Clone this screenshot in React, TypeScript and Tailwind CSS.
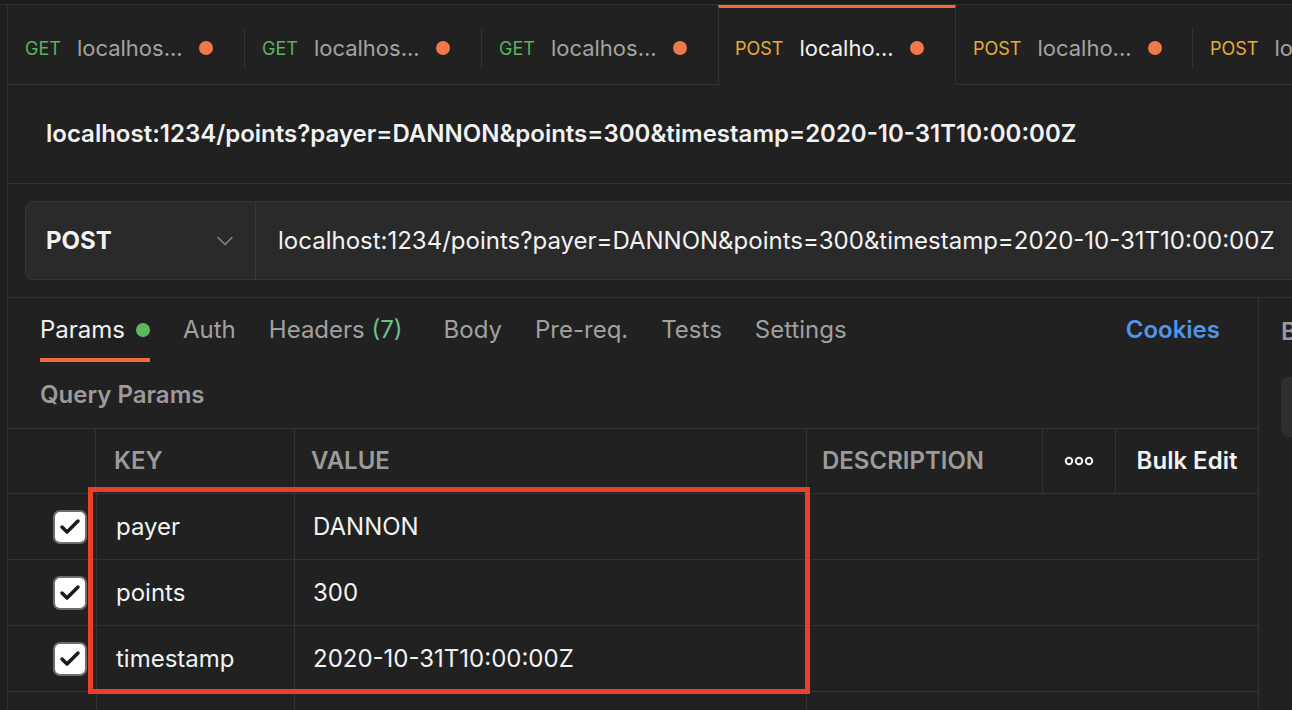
import { Check, ChevronDown } from 'lucide-react';

const tabs = [
  { method: 'GET', label: 'localhos...', active: false },
  { method: 'GET', label: 'localhos...', active: false },
  { method: 'GET', label: 'localhos...', active: false },
  { method: 'POST', label: 'localho...', active: true },
  { method: 'POST', label: 'localho...', active: false },
  { method: 'POST', label: 'localhost:1234', active: false },
];

const params = [
  { key: 'payer', value: 'DANNON' },
  { key: 'points', value: '300' },
  { key: 'timestamp', value: '2020-10-31T10:00:00Z' },
];

const url = 'localhost:1234/points?payer=DANNON&points=300&timestamp=2020-10-31T10:00:00Z';

function Tab({ method, label, active }: { method: string; label: string; active: boolean }) {
  return (
    <div
      className={
        active
          ? 'relative z-10 -mb-px flex h-[80px] w-[238px] shrink-0 items-center gap-4 border-x border-t-[3px] border-x-[#333] border-t-[#f26b3a] bg-[#212121] px-4 pt-[3px]'
          : 'flex h-[79px] w-[236px] shrink-0 items-center gap-4 px-[17px] pt-[7px]'
      }
    >
      <span className={method === 'GET' ? 'text-[18px] text-[#59b35f]' : 'text-[18px] text-[#e9ac34]'}>{method}</span>
      <span className={active ? 'whitespace-nowrap text-[22px] text-[#f2f2f2]' : 'whitespace-nowrap text-[22px] text-[#a3a3a3]'}>{label}</span>
      <span className="h-[14px] w-[14px] shrink-0 rounded-full bg-[#f0784a]" />
    </div>
  );
}

function Sep() {
  return <div className="mt-[7px] h-[41px] w-px shrink-0 bg-[#333]" />;
}

function Dots() {
  return (
    <svg width="30" height="10" viewBox="0 0 30 10" fill="none" stroke="#f2f2f2" strokeWidth="2">
      <circle cx="5" cy="5" r="3.2" />
      <circle cx="15" cy="5" r="3.2" />
      <circle cx="25" cy="5" r="3.2" />
    </svg>
  );
}

export default function App() {
  return (
    <div className="relative flex h-[710px] w-[1292px] flex-col overflow-hidden bg-[#212121] font-['Inter',sans-serif]">
      {/* top strip */}
      <div className="h-[5px] shrink-0 border-b border-[#313131] bg-[#1b1b1b]" />
      <div className="flex min-h-0 flex-1">
        {/* left strip */}
        <div className="w-[8px] shrink-0 border-r border-[#313131] bg-[#1f1f1f]" />

        <div className="flex min-w-0 flex-1 flex-col">
          {/* open tabs */}
          <div className="flex h-[80px] shrink-0 items-center border-b border-[#333]">
            <Tab {...tabs[0]} />
            <Sep />
            <Tab {...tabs[1]} />
            <Sep />
            <Tab {...tabs[2]} />
            <Tab {...tabs[3]} />
            <Tab {...tabs[4]} />
            <Sep />
            <Tab {...tabs[5]} />
          </div>

          {/* request title */}
          <div className="flex h-[99px] shrink-0 items-center border-b border-[#333] pl-[38px]">
            <span className="whitespace-nowrap text-[24px] font-semibold text-[#f2f2f2]">{url}</span>
          </div>

          {/* url bar */}
          <div className="shrink-0 py-[17px] pl-[17px]">
            <div className="flex h-[79px] w-[1300px] items-center rounded-lg border border-[#363636] bg-[#2a2a2a]">
              <div className="flex h-full w-[230px] shrink-0 items-center justify-between border-r border-[#3a3a3a] pl-5 pr-[16px]">
                <span className="text-[24px] font-bold text-[#f2f2f2]">POST</span>
                <ChevronDown className="h-[28px] w-[28px] text-[#8c8c8c]" strokeWidth={1.2} />
              </div>
              <span className="whitespace-nowrap pl-[22px] text-[24px] text-[#f2f2f2]">{url}</span>
            </div>
          </div>

          {/* request body */}
          <div className="flex min-h-0 flex-1 border-t border-[#333]">
            <div className="flex w-[1251px] shrink-0 flex-col border-r border-[#333]">
              {/* sub tabs */}
              <div className="flex h-[64px] shrink-0 items-stretch pl-[32px] pr-[38px] text-[24px]">
                <div className="mr-[33px] flex flex-col">
                  <div className="flex flex-1 items-center gap-[11px] pt-[4px]">
                    <span className="text-[#f2f2f2]">Params</span>
                    <span className="h-[14px] w-[14px] rounded-full bg-[#5cb85c]" />
                  </div>
                  <div className="h-[4px] bg-[#f26b3a]" />
                </div>
                <div className="flex items-center gap-[33px] text-[#a0a0a0]">
                  <span>Auth</span>
                  <span>
                    Headers <span className="text-[#6cc08a]">(7)</span>
                  </span>
                  <span className="ml-[8px]">Body</span>
                  <span>Pre-req.</span>
                  <span>Tests</span>
                  <span>Settings</span>
                </div>
                <div className="ml-auto flex items-center font-semibold text-[#4f95ea]">Cookies</div>
              </div>

              {/* query params label */}
              <div className="flex h-[66px] shrink-0 items-center pl-[32px] text-[24px] font-semibold text-[#9b9b9b]">
                Query Params
              </div>

              {/* table */}
              <div className="border-t border-[#333]">
                <div className="flex h-[65px] border-b border-[#333] text-[24px] font-semibold">
                  <div className="w-[88px] shrink-0 border-r border-[#333]" />
                  <div className="flex w-[199px] shrink-0 items-center border-r border-[#333] pl-[18px] text-[#9b9b9b]">KEY</div>
                  <div className="flex w-[512px] shrink-0 items-center border-r border-[#333] pl-[16px] text-[#9b9b9b]">VALUE</div>
                  <div className="flex w-[236px] shrink-0 items-center border-r border-[#333] pl-[15px] text-[#9b9b9b]">DESCRIPTION</div>
                  <div className="flex w-[73px] shrink-0 items-center justify-center border-r border-[#333]">
                    <Dots />
                  </div>
                  <div className="flex flex-1 items-center justify-center text-[#f2f2f2]">Bulk Edit</div>
                </div>
                {[...params, { key: '', value: '' }].map((p, i) => (
                  <div key={i} className="flex h-[66px] border-b border-[#333] text-[24px] text-[#f2f2f2]">
                    <div className="flex w-[88px] shrink-0 items-center justify-end pr-[9px]">
                      {p.key && (
                        <span className="flex h-[34px] w-[34px] items-center justify-center rounded-[7px] border-2 border-[#6e6e6e] bg-white">
                          <Check className="h-[24px] w-[24px] text-[#1a1a1a]" strokeWidth={3.5} />
                        </span>
                      )}
                    </div>
                    <div className="flex w-[199px] shrink-0 items-center border-l border-r border-[#333] pl-[19px]">{p.key}</div>
                    <div className="flex w-[512px] shrink-0 items-center border-r border-[#333] pl-[18px]">{p.value}</div>
                    <div className="flex-1" />
                  </div>
                ))}
              </div>
            </div>

            {/* right response panel */}
            <div className="flex min-w-0 flex-1 flex-col pl-[22px]">
              <div className="flex h-[64px] items-center pt-[4px] text-[24px] font-semibold text-[#9b9b9b]">B</div>
              <div className="mt-[15px] h-[60px] w-[60px] rounded-lg bg-[#2e2e2e]" />
            </div>
          </div>
        </div>
      </div>

      {/* highlight annotation */}
      <div className="pointer-events-none absolute left-[88px] top-[487px] h-[207px] w-[722px] border-[5px] border-[#ea3f28]" />
    </div>
  );
}
